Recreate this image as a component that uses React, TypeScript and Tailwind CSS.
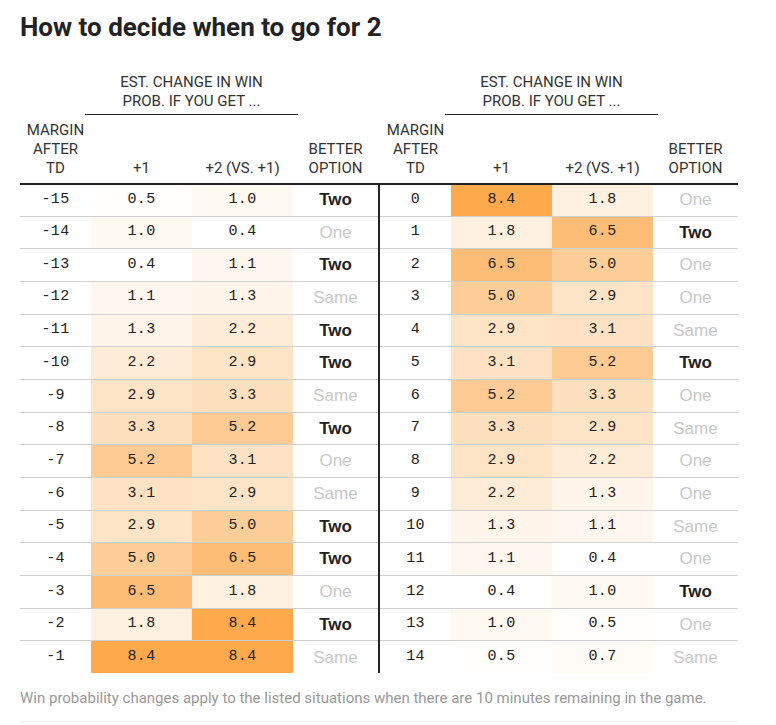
import React from 'react';

type Row = { margin: number; one: number; two: number; better: 'One' | 'Two' | 'Same' };

const leftRows: Row[] = [
  { margin: -15, one: 0.5, two: 1.0, better: 'Two' },
  { margin: -14, one: 1.0, two: 0.4, better: 'One' },
  { margin: -13, one: 0.4, two: 1.1, better: 'Two' },
  { margin: -12, one: 1.1, two: 1.3, better: 'Same' },
  { margin: -11, one: 1.3, two: 2.2, better: 'Two' },
  { margin: -10, one: 2.2, two: 2.9, better: 'Two' },
  { margin: -9, one: 2.9, two: 3.3, better: 'Same' },
  { margin: -8, one: 3.3, two: 5.2, better: 'Two' },
  { margin: -7, one: 5.2, two: 3.1, better: 'One' },
  { margin: -6, one: 3.1, two: 2.9, better: 'Same' },
  { margin: -5, one: 2.9, two: 5.0, better: 'Two' },
  { margin: -4, one: 5.0, two: 6.5, better: 'Two' },
  { margin: -3, one: 6.5, two: 1.8, better: 'One' },
  { margin: -2, one: 1.8, two: 8.4, better: 'Two' },
  { margin: -1, one: 8.4, two: 8.4, better: 'Same' },
];

const rightRows: Row[] = [
  { margin: 0, one: 8.4, two: 1.8, better: 'One' },
  { margin: 1, one: 1.8, two: 6.5, better: 'Two' },
  { margin: 2, one: 6.5, two: 5.0, better: 'One' },
  { margin: 3, one: 5.0, two: 2.9, better: 'One' },
  { margin: 4, one: 2.9, two: 3.1, better: 'Same' },
  { margin: 5, one: 3.1, two: 5.2, better: 'Two' },
  { margin: 6, one: 5.2, two: 3.3, better: 'One' },
  { margin: 7, one: 3.3, two: 2.9, better: 'Same' },
  { margin: 8, one: 2.9, two: 2.2, better: 'One' },
  { margin: 9, one: 2.2, two: 1.3, better: 'One' },
  { margin: 10, one: 1.3, two: 1.1, better: 'Same' },
  { margin: 11, one: 1.1, two: 0.4, better: 'One' },
  { margin: 12, one: 0.4, two: 1.0, better: 'Two' },
  { margin: 13, one: 1.0, two: 0.5, better: 'One' },
  { margin: 14, one: 0.5, two: 0.7, better: 'Same' },
];

// white at 0.4 up to full orange at 8.4
const heat = (v: number) => {
  const t = Math.min(1, Math.max(0, (v - 0.4) / 8));
  const r = Math.round(255 - 2 * t);
  const g = Math.round(255 - 86 * t);
  const b = Math.round(255 - 179 * t);
  return `rgb(${r}, ${g}, ${b})`;
};

const mono = "font-['Liberation_Mono',monospace] text-[15px] tracking-[0.3px] text-[#222]";
const grid = 'grid grid-cols-[71px_101px_101px_85px]';

const HeaderHalf = () => (
  <div className={`${grid} w-[358px] font-['Roboto',sans-serif] text-[15px] leading-[19px] text-[#333]`}>
    <div />
    <div className="col-span-2 -ml-[6px] -mr-[5px] border-b border-[#222] pb-[2.5px] pt-[0.5px] text-center">
      EST. CHANGE IN WIN
      <br />
      PROB. IF YOU GET ...
    </div>
    <div />
    <div className="flex h-[68px] items-end justify-center pb-[4.5px] text-center">
      MARGIN
      <br />
      AFTER
      <br />
      TD
    </div>
    <div className="flex h-[68px] items-end justify-center pb-[4.5px]">+1</div>
    <div className="flex h-[68px] items-end justify-center pb-[4.5px]">+2 (VS. +1)</div>
    <div className="flex h-[68px] items-end justify-center pb-[4.5px] text-center">
      BETTER
      <br />
      OPTION
    </div>
  </div>
);

const BodyHalf = ({ rows }: { rows: Row[] }) => (
  <div className="flex w-[358px] flex-col">
    {rows.map((row) => (
      <div
        key={row.margin}
        className={`${grid} h-[32.7px] border-t border-[#d0d0d0] first:h-[31px] first:border-t-0`}
      >
        <div className={`${mono} flex items-center justify-center`}>{row.margin}</div>
        <div className={`${mono} flex items-center justify-center`} style={{ backgroundColor: heat(row.one) }}>
          {row.one.toFixed(1)}
        </div>
        <div className={`${mono} flex items-center justify-center`} style={{ backgroundColor: heat(row.two) }}>
          {row.two.toFixed(1)}
        </div>
        <div
          className={
            row.better === 'Two'
              ? "flex items-center justify-center font-['Liberation_Sans',Arial,sans-serif] text-[17px] font-bold text-[#222]"
              : "flex items-center justify-center font-['Liberation_Sans',Arial,sans-serif] text-[17px] text-[#c8c8c8]"
          }
        >
          {row.better}
        </div>
      </div>
    ))}
  </div>
);

export default function App() {
  return (
    <div className="h-[725px] w-[776px] bg-white px-[20px] pt-[11px]">
      <h1 className="h-[32px] font-['Roboto',sans-serif] text-[26px] font-bold leading-[32px] text-[#222]">
        How to decide when to go for 2
      </h1>
      <div className="mt-[29.5px] w-[718px]">
        <div className="flex gap-[2px] border-b-2 border-[#222]">
          <HeaderHalf />
          <HeaderHalf />
        </div>
        <div className="flex">
          <BodyHalf rows={leftRows} />
          <div className="w-[2px] bg-[#222]" />
          <BodyHalf rows={rightRows} />
        </div>
        <p className="mt-[15px] border-b border-[#eee] pb-[13px] font-['Roboto',sans-serif] text-[15px] leading-[20px] text-[#999]">
          Win probability changes apply to the listed situations when there are 10 minutes remaining in the game.
        </p>
      </div>
    </div>
  );
}
